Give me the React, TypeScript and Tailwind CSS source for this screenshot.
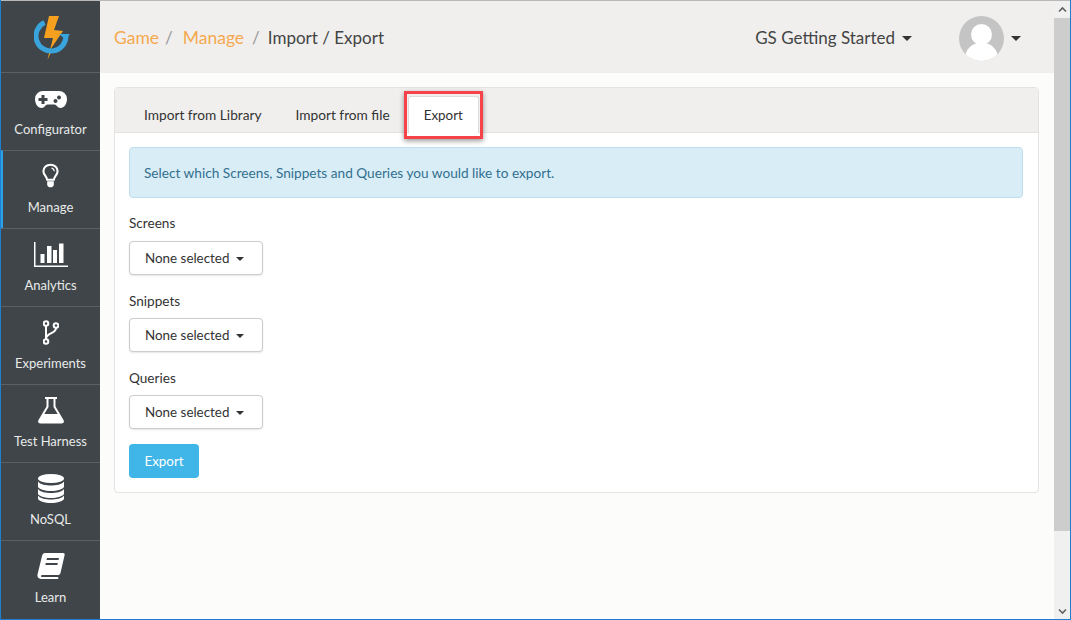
import React from "react";

const font = { fontFamily: '"Lato", "Liberation Sans", sans-serif' };

function Logo() {
  return (
    <svg width="36" height="46" viewBox="0 0 36 46">
      <path d="M16 34 L13.500 45 L18 35 Z" fill="#f5a11f" />
      <path d="M15 1 L25 1 L20 15 L29 16 L16 35 L19 23 L10 23 Z" fill="#f5a11f" />
      <path d="M10.500 7.500 A15 15 0 1 0 32 21" fill="none" stroke="#3aa5dc" strokeWidth="5" />
      <path d="M25 19 H36 L31.500 24.500 Z" fill="#3aa5dc" />
    </svg>
  );
}

function Gamepad() {
  return (
    <svg width="32" height="17" viewBox="0 0 32 17" fill="#fff">
      <path fillRule="evenodd" d="M8 0 H24 A8 8 0 0 1 32 8 C32 13 29 17 25.500 17 C22.500 17 21.500 13.500 19.500 13.500 H12.500 C10.500 13.500 9.500 17 6.500 17 C3 17 0 13 0 8 A8 8 0 0 1 8 0 Z M6.500 4 V7 H3.500 V10 H6.500 V13 H9.500 V10 H12.500 V7 H9.500 V4 Z M24 4.500 a2 2 0 1 0 .01 0 Z M20.500 8 a2 2 0 1 0 .01 0 Z" />
    </svg>
  );
}

function Bulb() {
  return (
    <svg width="17" height="26" viewBox="0 0 18 26" fill="none">
      <path d="M5.500 17 C5 13 1.500 12 1.500 8 A7.500 7.000 0 0 1 16.500 8 C16.500 12 13 13 12.500 17 Z" stroke="#fff" strokeWidth="2.200" />
      <path d="M5.500 18.500 H12.500 V22 C12.500 24 11 25 9 25 C7 25 5.500 24 5.500 22 Z" fill="#fff" />
      <path d="M13 8 A4 4 0 0 0 10 4.500" stroke="#fff" strokeWidth="1.300" />
    </svg>
  );
}

function Chart() {
  return (
    <svg width="34" height="25" viewBox="0 0 34 25" fill="#fff">
      <rect x="0" y="0" width="1.500" height="25" />
      <rect x="0" y="23.500" width="34" height="1.500" />
      <rect x="6.500" y="12" width="4" height="9" />
      <rect x="13" y="4" width="4.500" height="17" />
      <rect x="19" y="8" width="4" height="13" />
      <rect x="25" y="1.500" width="4.500" height="19.500" />
    </svg>
  );
}

function Branch() {
  return (
    <svg width="16" height="25" viewBox="0 0 16 25" fill="none" stroke="#fff" strokeWidth="2">
      <circle cx="3" cy="3.500" r="2.300" />
      <circle cx="13" cy="5.500" r="2.300" />
      <circle cx="3" cy="21.500" r="2.300" />
      <path d="M3 6 V19 M13 8 C13 14 4 12 3 18.500" />
    </svg>
  );
}

function Flask() {
  return (
    <svg width="26" height="27" viewBox="0 0 26 27" fill="#fff">
      <rect x="7" y="0" width="12" height="2" />
      <path fillRule="evenodd" d="M8.500 2 H10.500 V10 L6.300 17 H19.700 L15.500 10 V2 H17.500 V9.500 L25.500 23 C26.500 25 25.500 26.500 23.500 26.500 H2.500 C0.500 26.500 -0.500 25 0.500 23 L8.500 9.500 Z" />
    </svg>
  );
}

function Database() {
  return (
    <svg width="26" height="29" viewBox="0 0 26 29" fill="#fff">
      <ellipse cx="13" cy="4.500" rx="13" ry="4.500" />
      <path d="M0 7.500 C2 10.500 8 11.500 13 11.500 C18 11.500 24 10.500 26 7.500 V12.500 C26 15 19 17 13 17 C7 17 0 15 0 12.500 Z" />
      <path d="M0 15 C2 18 8 19 13 19 C18 19 24 18 26 15 V19.500 C26 22 19 24 13 24 C7 24 0 22 0 19.500 Z" />
      <path d="M0 21.500 C2 24.500 8 25.500 13 25.500 C18 25.500 24 24.500 26 21.500 V24.500 C26 27 19 29 13 29 C7 29 0 27 0 24.500 Z" />
    </svg>
  );
}

function Book() {
  return (
    <svg width="28" height="26" viewBox="0 0 28 26" fill="#fff">
      <path fillRule="evenodd" d="M8 0 H26 C27.500 0 28 1 27.500 2.500 L23.500 20 C23 21.500 22 22 21 22 H6 C4.500 22 3.500 22.500 4 23.500 C4.300 24 5 24 6 24 H21 L21.500 25.500 C21.300 25.800 21 26 20 26 H5 C2 26 0 24.500 0.500 21.500 L5 3 C5.500 1 6.500 0 8 0 Z M10 5 L9.500 7 H21.500 L22 5 Z M8.800 10 L8.300 12 H20.300 L20.800 10 Z" />
    </svg>
  );
}

function Caret({ className = "" }: { className?: string }) {
  return <span className={"inline-block h-0 w-0 border-x-[4px] border-t-[4px] border-x-transparent border-t-[#333] " + className} />;
}

const navItems: [string, React.ReactNode, number, string][] = [
  ["Configurator", <Gamepad />, 0, "pt-[5px]"],
  ["Manage", <Bulb />, 1, "pt-[3px]"],
  ["Analytics", <Chart />, 0, "pt-[3px]"],
  ["Experiments", <Branch />, 0, "pt-[3px]"],
  ["Test Harness", <Flask />, 0, "pt-[3px]"],
  ["NoSQL", <Database />, 0, "pt-[3px]"],
  ["Learn", <Book />, 0, "pt-[3px]"],
];

function Select({ label, first }: { label: string; first?: boolean }) {
  return (
    <div className="flex flex-col">
      <div className="mt-px h-[20px] text-[13.600px] leading-[20px] text-[#333]">{label}</div>
      <div className={"flex h-[34px] w-[134px] items-center rounded-[4px] border border-[#ccc] bg-white pl-[15px] text-[13.400px] text-[#333] shadow-[0_1px_2px_rgba(0,0,0,0.1)] " + (first ? "mt-[8px]" : "mt-[7px]")}>
        <span>None selected</span>
        <Caret className="ml-[7px] mt-[2px]" />
      </div>
    </div>
  );
}

export default function App() {
  return (
    <div className="flex h-[620px] w-[1071px] flex-col overflow-hidden border-x border-b border-x-[#1c7fd0] border-b-[#1c7fd0] bg-[#fcfcfa]" style={font}>
      <div className="h-px shrink-0 bg-[#b9b9b9]" />
      <div className="flex min-h-0 flex-1">
        <aside className="flex w-[99px] shrink-0 flex-col bg-[#3f4549]">
          <div className="flex h-[71px] shrink-0 items-center justify-center pl-[2px] pt-[3px]">
            <Logo />
          </div>
          {navItems.map(([label, icon, active, pad]) => (
            <div key={label} className={"relative flex h-[78px] shrink-0 flex-col items-center border-t border-[#5a6064] " + (active ? "border-l-2 border-l-[#2f9fe6] pr-[2px]" : "")}>
              <div className={"flex h-[47px] items-center justify-center " + pad}>{icon}</div>
              <div className="text-[13px] leading-[18px] text-[#e8eaea]">{label}</div>
            </div>
          ))}
        </aside>
        <main className="relative flex min-w-0 flex-1 flex-col">
          <header className="flex h-[72px] shrink-0 items-center bg-[#f0efee] pl-[14px] pt-[2px] text-[17px] text-[#444]">
            <span className="text-[17.500px] text-[#f5a94f]">Game</span>
            <span className="ml-[6px] mr-[10px] text-[#999]">/</span>
            <span className="text-[17.500px] text-[#f5a94f]">Manage</span>
            <span className="ml-[8px] mr-[8px] text-[#999]">/</span>
            <span>Import / Export</span>
            <span className="ml-auto">GS Getting Started</span>
            <Caret className="ml-[7px] mr-[47px] mt-[1px] border-x-[5px] border-t-[5px]" />
            <div className="relative mt-px h-[45px] w-[45px] overflow-hidden rounded-full bg-[#c4c4c4]">
              <div className="absolute left-[12px] top-[8px] h-[21px] w-[21px] rounded-full bg-white" />
              <div className="absolute left-[6px] top-[27px] h-[30px] w-[33px] rounded-full bg-white" />
            </div>
            <Caret className="ml-[7px] mr-[33px] mt-[1px] border-x-[5px] border-t-[5px]" />
          </header>
          <div className="pl-[14px] pr-[15px] pt-[14px]">
            <div className="rounded-[4px] border border-[#e4e3e1] bg-white">
              <div className="flex h-[45px] items-end border-b border-[#e4e3e1] bg-[#f0efee] pl-[14px] text-[13.700px] text-[#333]">
                <div className="flex h-[36px] items-center px-[15px] pt-[2px]">Import from Library</div>
                <div className="ml-[4px] flex h-[36px] items-center px-[15px] pt-[2px]">Import from file</div>
                <div className="relative -mb-px ml-[3px] flex h-[37px] items-center rounded-t-[3px] border-x border-t border-[#ddd] bg-white px-[15px] text-[13.400px]">Export</div>
              </div>
              <div className="flex flex-col gap-[14px] py-[14px] pl-[14px] pr-[15px]">
                <div className="flex h-[51px] items-center rounded-[4px] border border-[#bce0f0] bg-[#d9edf7] pl-[14px] pt-[2px] text-[13.650px] text-[#31708f]">
                  Select which Screens, Snippets and Queries you would like to export.
                </div>
                <div className="flex flex-col gap-[15px]">
                  <Select label="Screens" first />
                  <Select label="Snippets" />
                  <Select label="Queries" />
                </div>
                <div className="mt-px flex h-[34px] w-[70px] items-center justify-center rounded-[4px] bg-[#3fb5e8] text-[13.400px] text-white">Export</div>
              </div>
            </div>
          </div>
          <div className="absolute left-[304px] top-[90px] h-[48px] w-[79px] border-[3px] border-[#f6434a] shadow-[0_2px_5px_rgba(0,0,0,0.4)]" />
        </main>
        <div className="flex w-[16px] shrink-0 flex-col items-center bg-[#f0f0f0]">
          <svg className="my-[5px]" width="9" height="7" viewBox="0 0 9 7" fill="none" stroke="#606060" strokeWidth="1.600"><path d="M1 5.500 L4.500 2 L8 5.500" /></svg>
          <div className="h-[513px] w-full bg-[#cdcdcd]" />
          <svg className="mt-auto mb-[4px]" width="9" height="7" viewBox="0 0 9 7" fill="none" stroke="#606060" strokeWidth="1.600"><path d="M1 1.500 L4.500 5 L8 1.500" /></svg>
        </div>
      </div>
    </div>
  );
}
